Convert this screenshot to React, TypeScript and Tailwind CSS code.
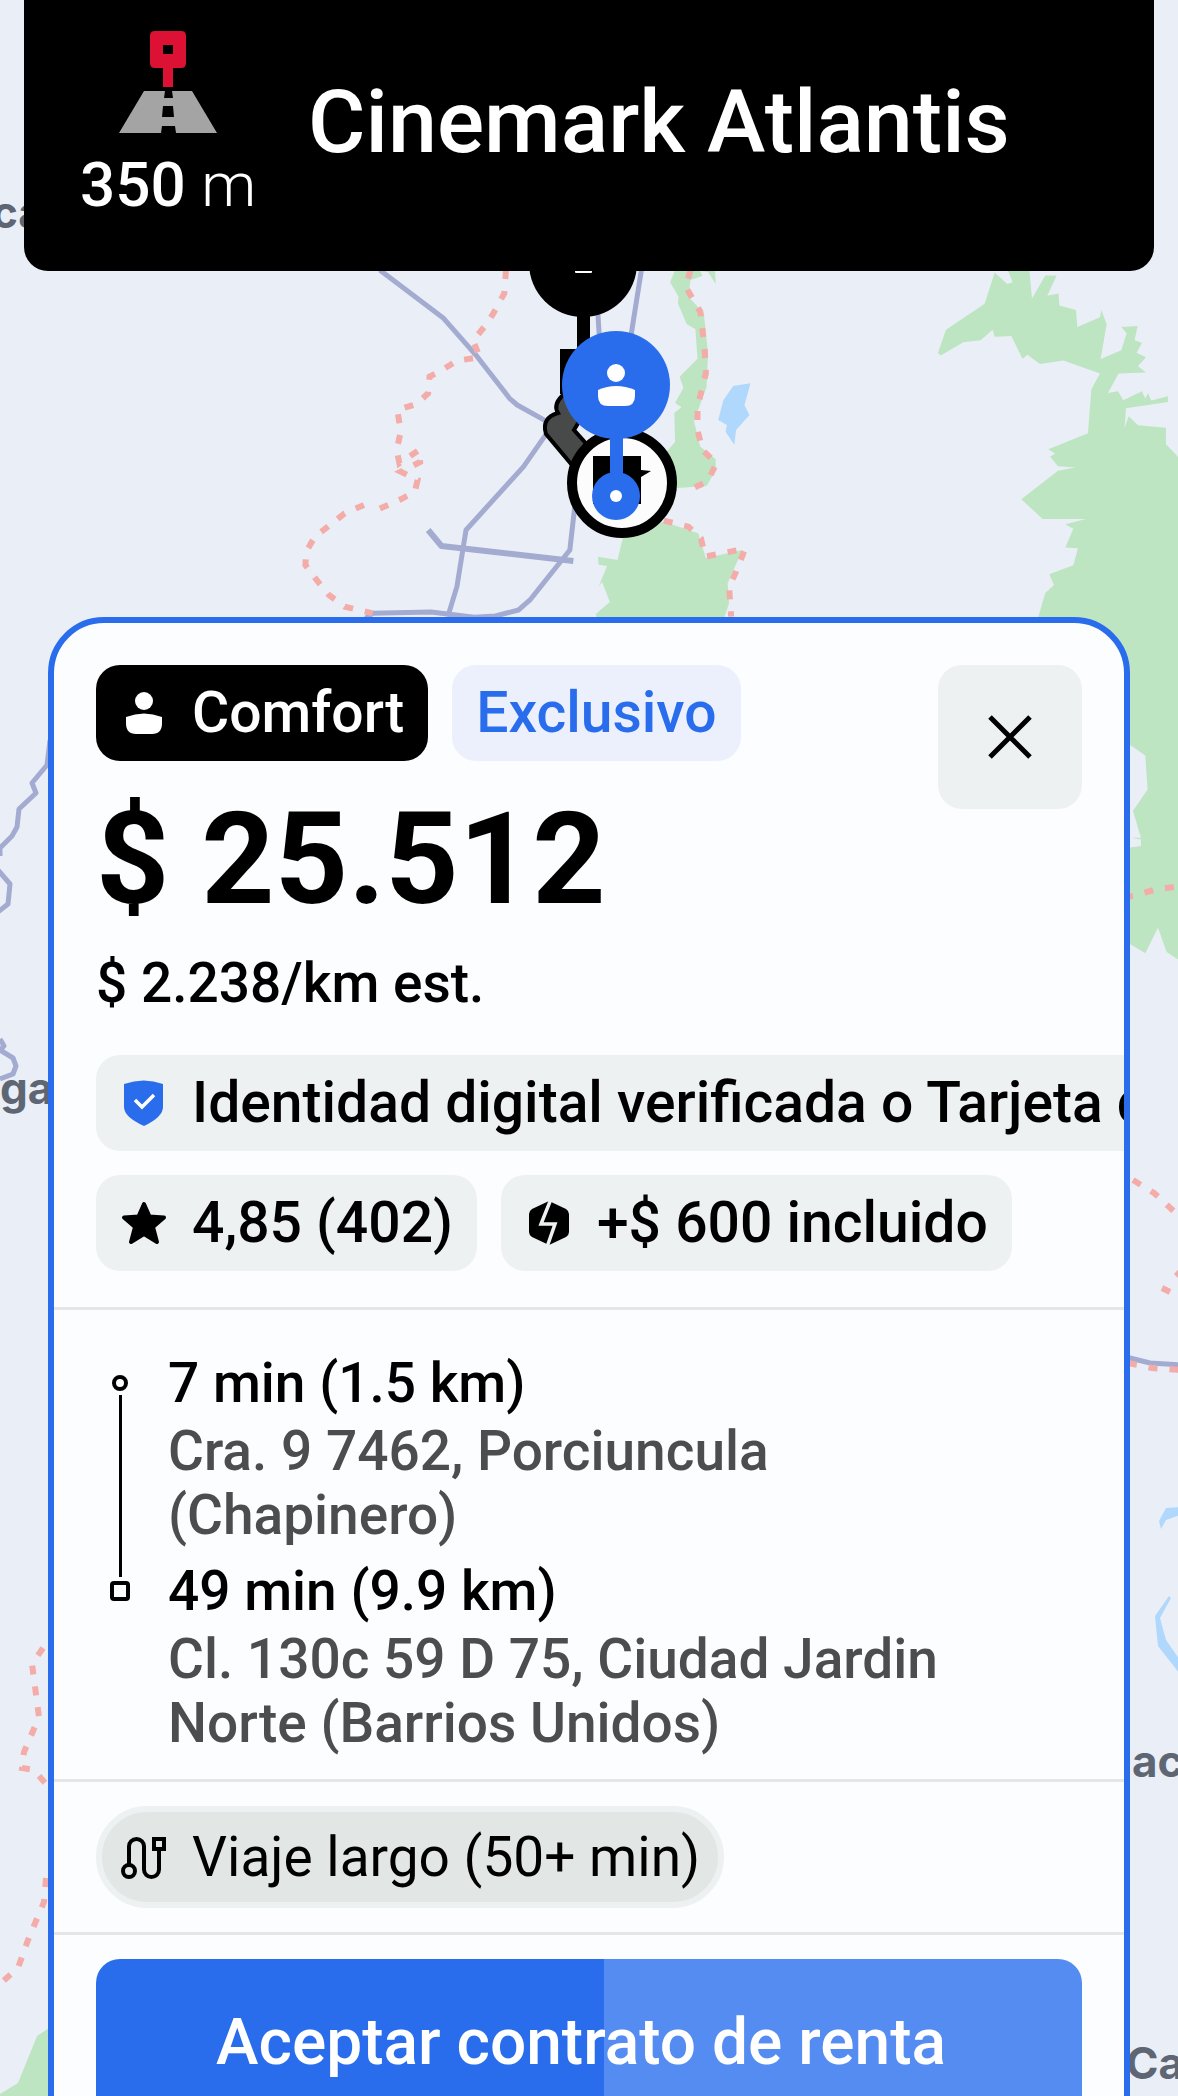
import type { ReactNode } from 'react';

const ROAD = '#a3abd0';
const PARK = '#bee5c2';
const BORDER_LINE = '#f3aca8';
const WATER = '#b0d8fc';

function Roads({ children }: { children: ReactNode }) {
  return (
    <g fill="none" stroke={ROAD} strokeWidth="5" strokeLinejoin="round">
      {children}
    </g>
  );
}

function Dashes({ d }: { d: string }) {
  return <path d={d} fill="none" stroke={BORDER_LINE} strokeWidth="6" strokeDasharray="9 12" vectorEffect="non-scaling-stroke" />;
}

function MapBackground() {
  return (
    <svg
      className="absolute inset-0 h-full w-full bg-[#eaeef7]"
      viewBox="0 0 1178 2096"
      preserveAspectRatio="xMidYMin slice"
      aria-hidden="true"
    >
      <g transform="translate(250 250) scale(0.3507 0.3333)">
        <g fill={PARK}>
          <path d="M1212 60 1198 97 1222 140 1220 160 1245 222 1270 238 1276 326 1225 380 1236 414 1212 458 1230 472 1210 488 1212 576 1180 615 1218 714 1302 708 1328 660 1328 628 1284 590 1266 514 1302 410 1306 310 1294 190 1250 140 1256 90 1290 78 1284 62 1306 66 1328 102 1326 60Z" />
          <path d="M1064 860 1048 930 992 920 994 944 1018 948 994 1010 1004 996 1026 1056 986 1092 990 1110 1350 1110 1366 1060 1362 1000 1404 900 1300 924 1278 850 1180 815Z" />
        </g>
        <path fill={WATER} d="M1378 408 1427 400 1410 465 1424 495 1386 540 1381 584 1356 545 1360 525 1335 510 1350 450Z" />
        <Roads>
          <path vectorEffect="non-scaling-stroke" d="M370 60 552 205 648 320 740 445 762 465 842 512" />
          <path vectorEffect="non-scaling-stroke" d="M846 550 780 650 616 840 590 1010 564 1100" />
          <path vectorEffect="non-scaling-stroke" d="M926 770 912 900 800 1048 766 1080 700 1098 640 1102 516 1086 350 1090 330 1105" />
          <path vectorEffect="non-scaling-stroke" d="M1116 60 1086 260M992 190 996 260" />
          <path vectorEffect="non-scaling-stroke" strokeWidth="6" d="M508 840 546 888 922 933" />
        </Roads>
        <Dashes d="M730 60 725 130 694 190 670 228 636 272 655 322 590 332 540 365 512 380 508 430 475 462 420 480 430 545 418 600 426 640 482 600 485 636 430 665 478 690 470 725 430 748 350 785" />
        <Dashes d="M325 765 270 790 210 840 186 858 160 905 158 945 190 990 225 1035 270 1070 350 1090" />
        <Dashes d="M1256 60 1242 110 1284 185 1296 290 1300 370 1276 470 1276 540 1290 600 1330 640 1304 695 1240 725" />
        <Dashes d="M1180 812 1250 830 1286 866 1298 920 1412 896 1384 970 1366 1010 1372 1100" />
      </g>

      <g transform="translate(780 260) scale(0.3333 0.4464)" fill={PARK}>
        <path d="M644 28 614 98 498 156 474 208 482 214 550 184 602 180 638 156 644 172 694 170 728 222 742 212 780 233 850 225 960 254 934 290 924 388 805 424 826 434 810 440 834 462 886 465 834 472 724 536 788 580 918 580 856 592 880 602 856 644 894 646 880 684 808 704 822 728 796 746 774 802 900 900 1000 1088 1054 1088 1096 1110 1103 1186 1059 1234 1083 1294 1054 1294 1083 1298 1083 1313 1050 1316 1050 1532 1096 1553 1134 1496 1160 1550 1200 1570 1200 445 1158 413 1158 376 1074 370 1046 350 1034 376 1038 332 1164 318 1164 305 1114 315 1104 298 1096 310 1086 294 1030 314 1014 294 984 298 1016 254 1098 252 1074 238 1098 218 1070 208 1086 186 1064 180 1073 148 1024 150 1040 164 1024 202 962 222 980 144 964 112 960 128 892 150 888 112 838 102 836 75 802 80 830 35 796 35 756 86 748 20 684 24 698 50 682 54Z" />
      </g>
      <Dashes d="M1124 897 1133 896 1154 890 1180 886" />

      <path d="M0 2094 18 2083 37 2036 52 2026 52 2100 0 2100Z" fill={PARK} />
      <Roads>
        <path d="M50 740 47 765 32 783 36 793 19 809 17 827 12 836 0 848V856M-2 870 10 884 8 904 -2 912M0 1039 4 1046 0 1050 13 1058 16 1066 13 1074 0 1079M1126 1357 1150 1363 1180 1365" />
      </Roads>
      <Dashes d="M43 1648 32 1664 39 1717 24 1752 22 1768 34 1770 46 1784" />
      <Dashes d="M46 1878 44 1902 28 1940 18 1968 0 1984" />
      <Dashes d="M1133 1180 1154 1193 1178 1215M1180 1272 1176 1276M1170 1292 1162 1288M1128 1363 1152 1368 1180 1370" />
      <path d="M1161 1529 1159 1521 1166 1508 1180 1507 1180 1515 1166 1520ZM1169 1596 1155 1616 1158 1646 1180 1674 1180 1660 1166 1640 1160 1618 1171 1598Z" fill={WATER} />

      <g fill="#5e6674" className="font-['Inter'] text-[44px] font-bold">
        <text x="-8" y="228">ca</text>
        <text x="0" y="1104">ga</text>
        <text x="1132" y="1777">ac</text>
        <text x="1126" y="2079">Ca</text>
      </g>

      <path d="M577 385 562 396Q553 405 558 413 541 418 546 434L572 465 590 448 574 430 580 420Z" fill="#484a49" stroke="#000" strokeWidth="4" />
      <rect x="560" y="349" width="40" height="45" />
      <rect x="577" y="300" width="13" height="60" />
      <circle cx="583" cy="263" r="54" />
      <rect x="575" y="270" width="17" height="3" rx="1" fill="#fff" />
      <circle cx="622" cy="483" r="50" fill="#fcfcfc" stroke="#000" strokeWidth="10" />
      <path d="M593 456H641V470L651 471 641 477V504H593Z" />
      <rect x="610" y="430" width="13" height="60" fill="#296ded" />
      <circle cx="616" cy="385" r="54" fill="#296ded" />
      <circle cx="616" cy="496" r="24" fill="#296ded" />
      <circle cx="616" cy="496" r="6" fill="#fff" />
      <circle cx="616" cy="373" r="9" fill="#fff" />
      <path d="M598 390Q616 382 635 390V396Q635 406 625 406H608Q598 406 598 396Z" fill="#fff" />
    </svg>
  );
}

function RoadPinIcon() {
  return (
    <svg className="h-[104px] w-[98px]" viewBox="0 0 98 104" aria-hidden="true">
      <path fill="#dd1133" fillRule="evenodd" d="M34 0H62Q67 0 67 5V32Q67 37 62 37H54V56H44V37H36Q31 37 31 32V5Q31 0 36 0ZM44 14V23H54V14Z" />
      <path fill="#a4a4a4" fillRule="evenodd" d="M25 60H73L98 102H0ZM46 60 45 67H54L53 60ZM44 75 43 86H55L54 75ZM43 95 42 102H57L56 95Z" />
    </svg>
  );
}

function PersonIcon() {
  return (
    <svg className="size-12 shrink-0" viewBox="0 0 48 48" fill="currentColor" aria-hidden="true">
      <circle cx="24" cy="12" r="9" />
      <path d="M6 28Q24 21 42 28V34Q42 45 32 45H16Q6 45 6 34Z" />
    </svg>
  );
}

function ShieldIcon() {
  return (
    <svg className="size-12 shrink-0" viewBox="0 0 48 48" aria-hidden="true">
      <path fill="#296ded" d="M4 5Q24-2 43 5V28Q43 38 24 47Q4 38 4 28Z" />
      <path d="M15 21 22 28 34 16" fill="none" stroke="#fff" strokeWidth="3.5" />
    </svg>
  );
}

function StarIcon() {
  return (
    <svg className="size-12 shrink-0" viewBox="0 0 48 48" aria-hidden="true">
      <path strokeWidth="4" stroke="#000" strokeLinejoin="round" d="M24 5 29.5 17.5 44 18.5 33 28 37 43 24 35 11 43 15 28 4 18.5 18.5 17.5Z" />
    </svg>
  );
}

function BoltIcon() {
  return (
    <svg className="size-12 shrink-0" viewBox="0 0 48 48" aria-hidden="true">
      <path d="M24 2 41 10Q44 12 44 15V33Q44 36 41 38L24 46 7 38Q4 36 4 33V15Q4 12 7 10Z" />
      <path d="M26 0 16 25H30L22 48" fill="none" stroke="#eef1f2" strokeWidth="3.5" />
    </svg>
  );
}

function RouteIcon() {
  return (
    <svg className="size-12 shrink-0" viewBox="0 0 48 48" fill="none" stroke="#000" strokeWidth="4" aria-hidden="true">
      <circle cx="9" cy="38" r="6" />
      <path d="M9 32V13.5A7.5 7.5 0 0 1 24 13.5V36.5A7.5 7.5 0 0 0 39 36.5V16" />
      <rect x="34" y="6" width="10" height="10" />
    </svg>
  );
}

function Chip({ className, children }: { className: string; children: ReactNode }) {
  return (
    <div className={`flex h-24 w-max items-center gap-6 rounded-3xl px-6 text-[57px] font-medium whitespace-nowrap ${className}`}>
      {children}
    </div>
  );
}

function Stop({ time, children }: { time: string; children: ReactNode }) {
  return (
    <li>
      <p>{time}</p>
      <p className="mt-1 text-[#4b4d4f]">{children}</p>
    </li>
  );
}

export default function App() {
  return (
    <main className="relative flex h-screen flex-col overflow-hidden font-['Roboto',sans-serif] text-black">
      <MapBackground />

      <header className="relative mx-6 flex h-[271px] shrink-0 gap-[52px] rounded-b-3xl bg-black pl-14 text-white">
        <div className="flex flex-col items-center pt-[31px]">
          <RoadPinIcon />
          <p className="mt-[14px] text-[62px] leading-[72px] font-medium whitespace-nowrap">
            350 <span className="font-light">m</span>
          </p>
        </div>
        <h1 className="pt-[68px] text-[88px] leading-[108px] font-medium whitespace-nowrap">Cinemark Atlantis</h1>
      </header>

      <article className="relative mx-12 mt-[346px] shrink-0 overflow-hidden rounded-t-[56px] border-6 border-[#296ded] bg-[#fcfdfe]">
        <section className="px-[42px] pt-[42px] pb-9">
          <div className="flex items-start justify-between">
            <div>
              <div className="flex gap-6">
                <Chip className="bg-black text-white">
                  <PersonIcon />
                  Comfort
                </Chip>
                <Chip className="bg-[#ecf0fc] text-[#296ded]">Exclusivo</Chip>
              </div>
              <h2 className="mt-[34px] text-[128px] leading-[128px] font-bold">$ 25.512</h2>
              <p className="mt-7 text-[55px] leading-[64px] font-medium">$ 2.238/km est.</p>
            </div>
            <button type="button" aria-label="Cerrar" className="flex size-36 items-center justify-center rounded-3xl bg-[#eef1f2]">
              <svg className="size-11" viewBox="0 0 44 44" fill="none" stroke="#000" strokeWidth="5" aria-hidden="true">
                <path d="M2 2 42 42M42 2 2 42" />
              </svg>
            </button>
          </div>
          <div className="mt-10 flex flex-col gap-6">
            <Chip className="bg-[#eef1f2]">
              <ShieldIcon />
              Identidad digital verificada o Tarjeta de
            </Chip>
            <div className="flex gap-6">
              <Chip className="bg-[#eef1f2]">
                <StarIcon />
                4,85 (402)
              </Chip>
              <Chip className="bg-[#eef1f2]">
                <BoltIcon />
                +$ 600 incluido
              </Chip>
            </div>
          </div>
        </section>

        <section className="flex gap-6 border-t-3 border-[#e4e6e8] px-[42px] pt-[41px] pb-6 text-[55px] leading-[64px] font-medium">
          <div className="flex h-[250px] w-12 shrink-0 flex-col items-center justify-between pt-6" aria-hidden="true">
            <span className="size-4 shrink-0 rounded-full border-4 border-black" />
            <span className="my-1 w-[3px] flex-1 bg-black" />
            <span className="size-5 shrink-0 rounded-sm border-4 border-black" />
          </div>
          <ul className="flex flex-1 flex-col gap-3">
            <Stop time="7 min (1.5 km)">
              Cra. 9 7462, Porciuncula
              <br />
              (Chapinero)
            </Stop>
            <Stop time="49 min (9.9 km)">
              Cl. 130c 59 D 75, Ciudad Jardin
              <br />
              Norte (Barrios Unidos)
            </Stop>
          </ul>
        </section>

        <section className="border-t-3 border-[#e4e6e8] px-[42px] py-6">
          <div className="flex h-[102px] w-max items-center gap-6 rounded-full border-6 border-[#edf1f1] bg-[#e2e7e6] px-[18px] text-[55px] whitespace-nowrap">
            <RouteIcon />
            Viaje largo (50+ min)
          </div>
        </section>

        <section className="border-t-3 border-[#e4e6e8] px-[42px] pt-6 pb-10">
          <button
            type="button"
            className="h-[168px] w-full rounded-3xl bg-linear-to-r from-[#296ded] from-[51.5%] to-[#548cf1] to-[51.5%] pr-4 text-[64px] font-medium text-white"
          >
            Aceptar contrato de renta
          </button>
        </section>
      </article>
    </main>
  );
}
